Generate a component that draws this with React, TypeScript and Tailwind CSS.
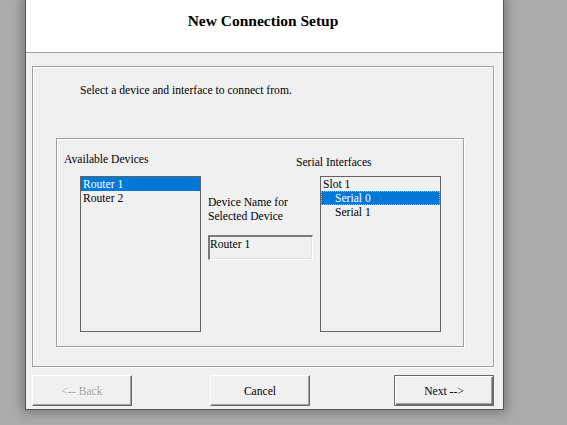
import React from "react";

const serif = { fontFamily: '"Liberation Serif", "Times New Roman", serif' };

function ListBox({ children }: { children: React.ReactNode }) {
  return (
    <div className="w-[121px] h-[156px] border border-[#646464] bg-[#f0f0f0] flex flex-col">
      {children}
    </div>
  );
}

function Row({
  label,
  selected = false,
  indent = false,
  focus = false,
}: {
  label: string;
  selected?: boolean;
  indent?: boolean;
  focus?: boolean;
}) {
  return (
    <div
      className={
        "h-[14px] whitespace-nowrap " +
        (selected ? "bg-[#0078d7] text-white " : "text-black ") +
        (focus ? "border border-dotted border-[#e8a860] leading-[13px] " : "leading-[15px] ") +
        (indent ? (focus ? "pl-[13px]" : "pl-[14px]") : "pl-[2px]")
      }
    >
      {label}
    </div>
  );
}

export default function App() {
  return (
    <div
      className="w-[567px] h-[425px] bg-[#ababab] overflow-hidden text-[11.6px] text-black"
      style={serif}
    >
      <div className="ml-[25px] w-[479px] h-[410px] bg-[#f0f0f0] border-x border-b border-[#555555] shadow-[0_0_10px_3px_rgba(0,0,0,0.28)] flex flex-col">
        {/* Header */}
        <div className="h-[53px] bg-white border-b border-[#a0a0a0] flex justify-center pt-[12px] shrink-0">
          <div className="text-[15.5px] font-bold leading-[18px] -ml-[3px]">New Connection Setup</div>
        </div>

        {/* Outer group */}
        <div className="ml-[6px] mt-[13px] w-[462px] h-[301px] border border-[#a0a0a0] shadow-[inset_1px_1px_0_#ffffff,1px_1px_0_#ffffff] flex flex-col shrink-0">
          <div className="pl-[47px] mt-[17px] leading-[14px]">
            Select a device and interface to connect from.
          </div>

          {/* Inner group */}
          <div className="ml-[23px] mt-[40px] w-[408px] h-[209px] border border-[#a0a0a0] shadow-[inset_1px_1px_0_#ffffff,1px_1px_0_#ffffff] flex items-start">
            {/* Column 1 */}
            <div className="pl-[7px] flex flex-col">
              <div className="mt-[14px] leading-[14px]">Available Devices</div>
              <div className="ml-[16px] mt-[9px]">
                <ListBox>
                  <Row label="Router 1" selected />
                  <Row label="Router 2" />
                </ListBox>
              </div>
            </div>

            {/* Column 2 */}
            <div className="ml-[7px] w-[105px] flex flex-col">
              <div className="mt-[57px] leading-[14px]">
                Device Name for
                <br />
                Selected Device
              </div>
              <div className="mt-[11px] w-[105px] h-[25px] border-t-2 border-l-2 border-t-[#7a7a7a] border-l-[#7a7a7a] border-b border-r border-b-[#ffffff] border-r-[#ffffff] shadow-[inset_-1px_-1px_0_#e3e3e3] leading-[15px]">
                Router 1
              </div>
            </div>

            {/* Column 3 */}
            <div className="ml-[7px] flex flex-col">
              <div className="-ml-[24px] mt-[17px] leading-[14px] whitespace-nowrap">
                Serial Interfaces
              </div>
              <div className="mt-[6px]">
                <ListBox>
                  <Row label="Slot 1" />
                  <Row label="Serial 0" selected indent focus />
                  <Row label="Serial 1" indent />
                </ListBox>
              </div>
            </div>
          </div>
        </div>

        {/* Buttons */}
        <div className="mt-[8px] ml-[6px] flex items-start">
          <button className="w-[100px] h-[31px] pt-[2px] border-t border-l border-t-white border-l-white border-b border-r border-b-[#696969] border-r-[#696969] shadow-[inset_-1px_-1px_0_#a0a0a0] bg-[#f0f0f0] text-[#a0a0a0] [text-shadow:1px_1px_0_#ffffff] flex items-center justify-center leading-[14px]">
            &lt;-- Back
          </button>
          <button className="ml-[78px] w-[100px] h-[31px] pt-[2px] border-t border-l border-t-white border-l-white border-b border-r border-b-[#696969] border-r-[#696969] shadow-[inset_-1px_-1px_0_#a0a0a0] bg-[#f0f0f0] text-black flex items-center justify-center leading-[14px]">
            Cancel
          </button>
          <button className="ml-[84px] w-[100px] h-[31px] pt-[2px] border border-[#696969] shadow-[inset_1px_1px_0_#ffffff,inset_-1px_-1px_0_#696969,inset_-2px_-2px_0_#a0a0a0] bg-[#f0f0f0] text-black flex items-center justify-center leading-[14px]">
            Next --&gt;
          </button>
        </div>
      </div>
    </div>
  );
}
